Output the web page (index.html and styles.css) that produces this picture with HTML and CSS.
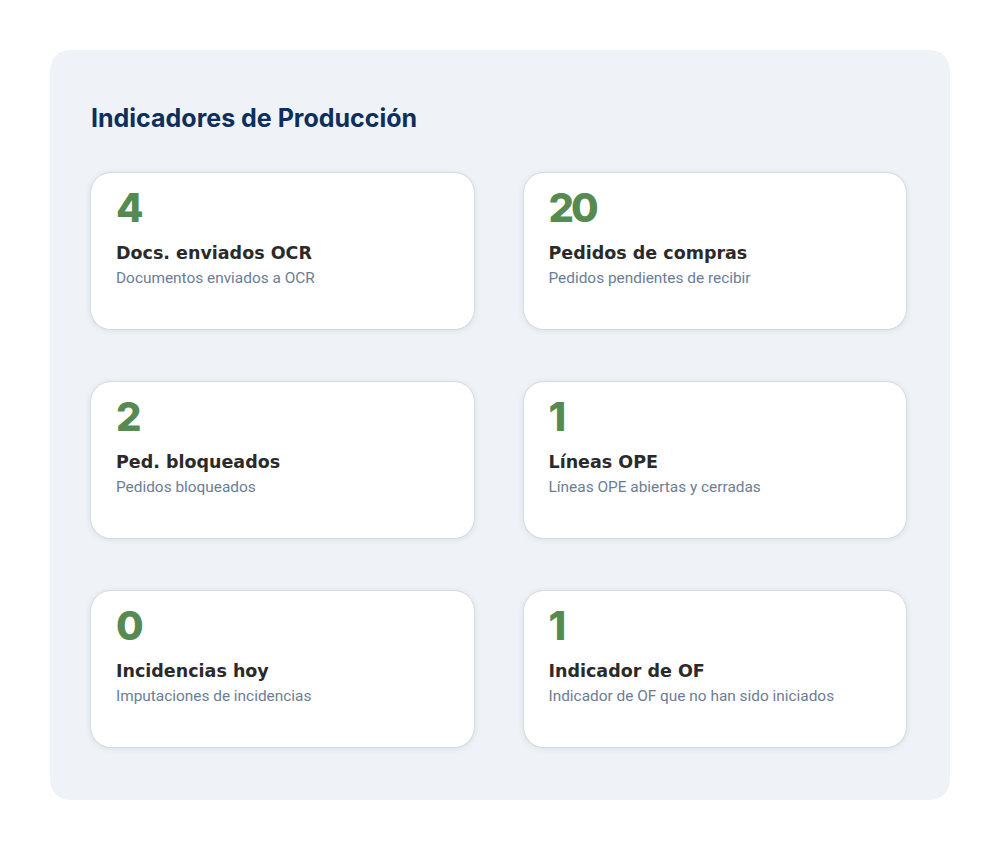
FILE: index.html
```html
<!DOCTYPE html>
<html lang="es">
<head>
<meta charset="utf-8">
<title>Indicadores de Producción</title>
<link rel="stylesheet" href="styles.css">
</head>
<body>
<section class="panel">
  <h2 class="panel-title">Indicadores de Producción</h2>
  <div class="grid">
    <div class="card">
      <div class="card-value">4</div>
      <div class="card-label">Docs. enviados OCR</div>
      <div class="card-desc">Documentos enviados a OCR</div>
    </div>
    <div class="card">
      <div class="card-value">20</div>
      <div class="card-label">Pedidos de compras</div>
      <div class="card-desc">Pedidos pendientes de recibir</div>
    </div>
    <div class="card">
      <div class="card-value">2</div>
      <div class="card-label">Ped. bloqueados</div>
      <div class="card-desc">Pedidos bloqueados</div>
    </div>
    <div class="card">
      <div class="card-value">1</div>
      <div class="card-label">Líneas OPE</div>
      <div class="card-desc">Líneas OPE abiertas y cerradas</div>
    </div>
    <div class="card">
      <div class="card-value">0</div>
      <div class="card-label">Incidencias hoy</div>
      <div class="card-desc">Imputaciones de incidencias</div>
    </div>
    <div class="card">
      <div class="card-value">1</div>
      <div class="card-label">Indicador de OF</div>
      <div class="card-desc">Indicador de OF que no han sido iniciados</div>
    </div>
  </div>
</section>
</body>
</html>
```

FILE: styles.css
```css
html, body {
  margin: 0;
  padding: 0;
  background: #ffffff;
}

body {
  padding: 50px;
  font-family: "Inter", "Open Sans", sans-serif;
}

.panel {
  box-sizing: border-box;
  width: 900px;
  height: 750px;
  background: #eff3f7;
  border-radius: 20px;
  padding: 52px 44px 53px 41px;
}

.panel-title {
  margin: 0 0 39px 0;
  font-family: "Inter", sans-serif;
  font-weight: 700;
  font-size: 25px;
  line-height: 32px;
  color: #0c2f5c;
}

.grid {
  display: grid;
  grid-template-columns: 1fr 1fr;
  grid-auto-rows: 156px;
  column-gap: 50px;
  row-gap: 53px;
}

.card {
  background: #ffffff;
  border-radius: 20px;
  box-shadow: 0 0 0 1px rgba(200, 206, 214, 0.5), 0 1px 7px rgba(20, 40, 70, 0.12);
  padding: 15px 24px 0 25px;
}

.card-value {
  font-family: "Inter", sans-serif;
  font-weight: 800;
  font-size: 40px;
  line-height: 40px;
  letter-spacing: -3px;
  color: #558b51;
}

.card-label {
  margin-top: 13px;
  font-family: "DejaVu Sans", sans-serif;
  font-weight: 700;
  font-size: 17.5px;
  line-height: 24px;
  color: #2a2a2a;
}

.card-desc {
  margin-top: 3px;
  font-family: "Roboto", sans-serif;
  font-weight: 400;
  font-size: 15.4px;
  line-height: 20px;
  color: #6b7d96;
}
```
